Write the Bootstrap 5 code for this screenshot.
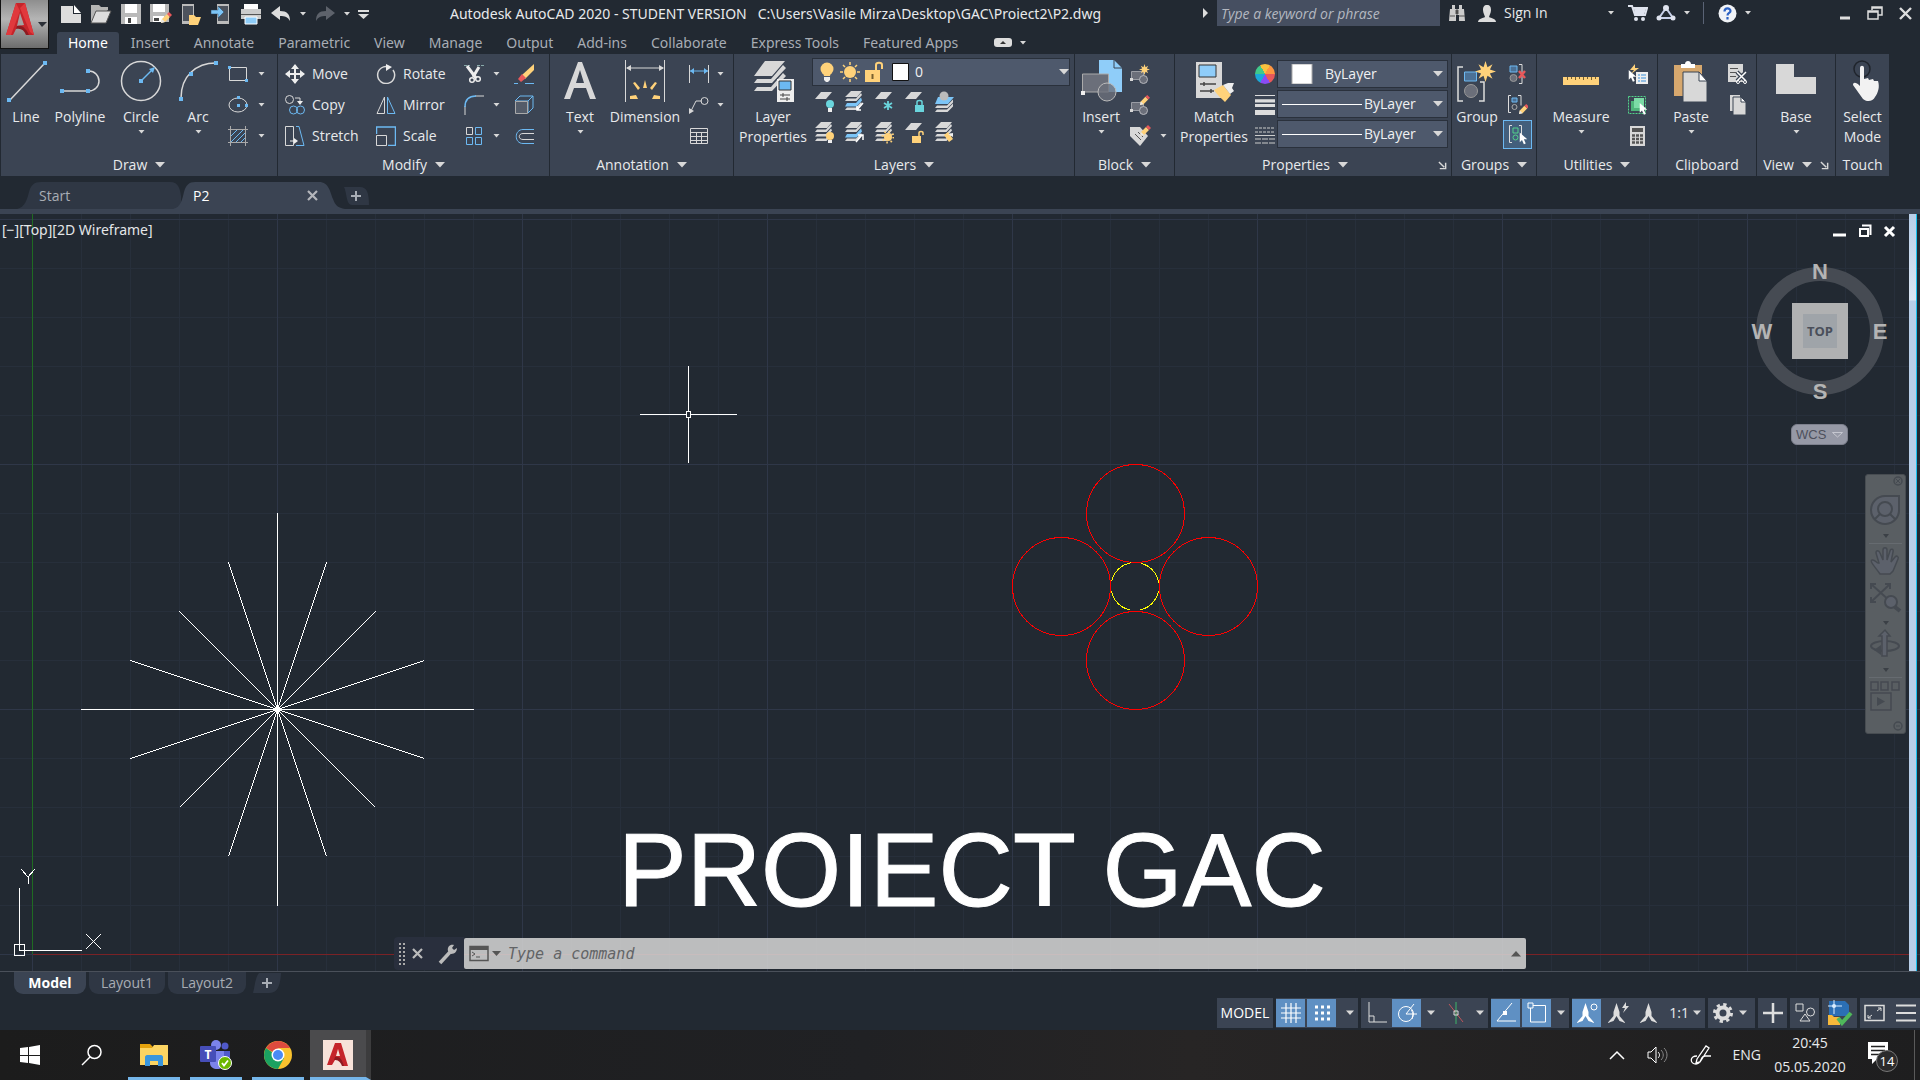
<!DOCTYPE html>
<html lang="en">
<head>
<meta charset="utf-8">
<meta name="viewport" content="width=device-width, initial-scale=1">
<title>Autodesk AutoCAD 2020 - P2.dwg</title>
<link rel="stylesheet" href="https://cdn.jsdelivr.net/npm/bootstrap@5.3.0/dist/css/bootstrap.min.css">
<style>
:root{--bg:#222932;--pan:#3b4453;--on:#5f90c3}
body{font-family:"Open Sans","Noto Sans",sans-serif;font-size:14px;line-height:20px;color:#e8eaec;background:var(--bg)}
button{background:none;border:0;padding:0;color:inherit;font:inherit}
svg{display:block;flex:none;fill:none}
a{color:inherit;text-decoration:none}
.app{min-height:100vh}
.logo{width:49px;height:49px;background:linear-gradient(#8e8e8e,#b5b5b5 40%,#6d6d6d);border:1px solid #111;border-top:0}
.titlebar{height:32px}
.qat{height:27px;padding-left:7px}
.qbtn{width:30px;display:flex;justify-content:center}
.apptitle{margin-left:81px;padding-top:4px;white-space:nowrap}
.apptitle,.rtab,.vpl{font-family:"Noto Sans","Open Sans",sans-serif}
.search{width:223px;height:26px;background:#464f61;border:0;color:#c9ccd2;font-style:italic;padding:0 4px}
.search::placeholder{color:#b4b8c0;opacity:1}
.acct{width:480px}
.rtab{height:22px;line-height:22px;padding:0 12px;color:#a8adb5;white-space:nowrap;display:block}
.rtab.active{background:var(--pan);color:#fff;border-radius:3px 3px 0 0;padding:0 11px}
.ribbon{height:122px;padding-left:1px}
.rpanel{background:var(--pan);margin-right:1px;display:flex;flex-direction:column;flex:none}
.pbody{height:100px;display:flex;padding-top:4px}
.ptitle{height:22px;display:flex;align-items:center;justify-content:center;gap:8px;white-space:nowrap}
.big{display:flex;flex-direction:column;align-items:center;padding-top:2px;flex:none;white-space:nowrap}
.big svg.ic{width:44px;height:42px}
.big .lb{line-height:20px;height:28px;padding-top:5px}
.stack{display:flex;flex-direction:column;flex:none}
.sb{height:31px;display:flex;align-items:center;gap:7px;white-space:nowrap}
.cv{margin-left:2px}
.combo{background:#4e596c;border:1px solid #2a313c;display:flex;align-items:center;height:28px;margin-bottom:2px}
.combo select{appearance:none;background:transparent;border:0;color:#f0f1f3;flex:1 1 0;min-width:0;padding:0;height:24px;font:inherit}
.doctabs{height:33px;padding-left:24px}
.dtab{position:relative;width:156px;height:27px;display:flex;align-items:center;padding-left:15px;color:#a8adb5}
.dtab>svg.shape{position:absolute;left:-7px;top:0;z-index:0}
.dtab>*{z-index:1}
.strip{height:5px;background:var(--pan)}
.cad{position:relative;flex:1 1 auto;min-height:500px;overflow:hidden;border-bottom:1px solid #4a505a}
.scene{position:absolute;inset:0;width:100%;height:100%}
.vscroll{position:absolute;right:3px;top:0;bottom:0;width:8px;background:linear-gradient(#b9cfe9,#dbe6f4 86px,#b9cfe9 87px);border-right:1px solid #19c3f0}
.vpl{position:absolute;left:2px;top:6px;color:#e4e6e8}
.wctl{position:absolute;right:23px;top:9px;display:flex;gap:10px}
.vcube{position:absolute;right:31px;top:46px}
.vcube text{fill:#b4b4b4}
.wcs{position:absolute;right:72px;top:210px;width:57px;height:21px;border-radius:6px;background:#9699a6;border:1px solid #7d808d;color:#4d505c;font:13px/18px "Liberation Sans",sans-serif;display:flex;align-items:center;justify-content:space-between;padding:0 4px}
.navbox{position:absolute;right:14px;top:260px;background:#595e62;border-radius:3px;border:1px solid #474c51}
.cmd{position:absolute;left:394px;right:394px;bottom:1px;height:33px;display:flex}
.cmdl{width:70px;background:#292f3d;border-radius:4px 0 0 4px;display:flex;align-items:center;padding-left:1px}
.cmdr{flex:1;background:rgba(211,211,211,.87);border-radius:2px;display:flex;align-items:center;margin:1px 0;padding:0 5px}
.cmdr input{flex:1;height:28px;line-height:24px;background:transparent;border:0;outline:0;font-family:"DejaVu Sans Mono",monospace;font-style:italic;font-size:15px;color:#555;padding:0 7px}
.cmdr input::placeholder{color:#626466;opacity:1}
.bottom{height:58px}
.lay{padding-left:14px;gap:3px}
.ltab{height:22px;background:#2f3744;color:#a8adb5;border-radius:0 0 9px 9px;line-height:21px;text-align:center}
.ltab.active{background:var(--pan);color:#fff;font-weight:700}
.status{height:30px;margin-top:4px;gap:3px}
.sg{background:var(--pan);display:flex;align-items:center;height:30px;gap:2px;flex:none}
.st{width:29px;height:28px;display:flex;align-items:center;justify-content:center}
.st.on{background:var(--on)}
.st.wide{width:35px}
.task{height:50px;background:linear-gradient(90deg,#1c1c1c,#202124 45%,#272525 62%,#1e1e1f)}
.tk{width:52px;height:50px;display:flex;align-items:center;justify-content:center;margin-right:10px}
.tk.run{border-bottom:3px solid #75b6ea;padding-top:3px}
.tk.run.cur{background:#4b4b4d;width:61px;margin-left:-4px;border-right:5px solid #3c3c3d}
.clock{width:82px;text-align:center;line-height:24px}
.wheel{width:20px;height:20px;border-radius:50%;background:conic-gradient(#f9c13e 0 8%,#ff9640 8% 25%,#e8585a 25% 42%,#8a4bf5 42% 58%,#1aa9d8 58% 75%,#41c98a 75% 92%,#f9c13e 92%)}
.uicon{stroke:#454a51;stroke-width:2}
</style>
<script src="https://cdn.jsdelivr.net/npm/bootstrap@5.3.0/dist/js/bootstrap.bundle.min.js"></script>
</head>
<body>
<svg width="0" height="0" class="position-absolute" aria-hidden="true">
<symbol id="dn" viewBox="0 0 6 4"><path d="M0 0h6L3 3.6z" fill="#d8d8d8"/></symbol>
<symbol id="dl" viewBox="0 0 10 6"><path d="M0 0h10L5 5.5z" fill="#d8d8d8"/></symbol>
<symbol id="sheet" viewBox="0 0 20 20"><path d="M7 1h11l-6 7H1z" fill="#d8d8d8"/></symbol>
<symbol id="stk" viewBox="0 0 20 20"><path d="M7 0h11l-5 6H1zM1 10l2-2.500h9l5-5.500 1 2-5.500 6zM1 14.500L3 12h9l5-5.500 1 2-5.500 6zM1 19l2-2.500h9l5-5.500 1 2-5.500 6z" fill="#d8d8d8"/></symbol>
<symbol id="stb" viewBox="0 0 20 20"><path d="M7 0h11l-5 6H1zM1 10l2-2.500h9l5-5.500 1 2-5.500 6zM1 19l2-2.500h9l5-5.500 1 2-5.500 6z" fill="#d8d8d8"/><path d="M1 15.500L3 12h9l5-5.500 1 3-5.500 6z" fill="#7cc5f7"/></symbol>
<symbol id="blk" viewBox="0 0 22 22"><path d="M2.500 8.500h12v8h-12z" fill="#6b6f7a" stroke="#9a9da5"/><circle cx="14.500" cy="16.500" r="4" fill="#6b6f7a" stroke="#b4b6bb"/><path d="M1 15h3v3H1z" fill="#d8d8d8"/></symbol>
<symbol id="pen" viewBox="0 0 12 12"><path d="M1 11l1-4 5-5 3 3-5 5z" fill="#ffd27a"/><path d="M7 2l2-2 3 3-2 2z" fill="#e8585a"/><path d="M1 11l1-4 3 3z" fill="#e8e8e8"/></symbol>
<symbol id="launch" viewBox="0 0 10 10"><path d="M1 1l6 6M8.500 2v6.500H2" stroke="#d8d8d8" stroke-width="1.600"/></symbol>
<symbol id="star" viewBox="0 0 20 20"><path d="M10 0l1.900 6 4.800-3-2.500 5 5.800 2-5.800 2 2.500 5-4.800-3-1.900 6-1.900-6-4.800 3 2.500-5L0 10l5.800-2-2.500-5 4.800 3z" fill="#ffd27a"/></symbol>
<symbol id="ptr" viewBox="0 0 12 16"><path d="M1 0v13l3-3 2.500 5.500 2.500-1L6.500 9H11z" fill="#fff"/></symbol>
<symbol id="annot" viewBox="0 0 20 22"><path d="M9.500 1c1 3 2 6 3 9v4l6 7-6-2-3-5-3 5-6 2 6-7v-4c1-3 2-6 3-9z" fill="currentColor"/></symbol>
</svg>

<div class="app d-flex flex-column">
<header class="d-flex">
  <button class="logo" aria-label="Application menu"><svg width="47" height="48" viewBox="0 0 47 48"><path d="M15 3h9l9 32h-7l-2-6c-4-3-7-3-9 0l-3 6H5z" fill="#c5242a"/><path d="M15 3l4 8-9 24H5zM24 3l9 32-4-3L19 8z" fill="#e0393d"/><path d="M19 13l4 12-7 1z" fill="#a3a3a3"/><path d="M16 26c4-1 8 0 12 9h-3c-2-5-5-7-10-6z" fill="#8e1a20"/><path d="M37 22h9l-5 5z" fill="#2b2f36"/></svg></button>
  <div class="flex-grow-1">
    <div class="titlebar d-flex align-items-start">
      <div class="qat d-flex align-items-center">
        <button class="qbtn" aria-label="New"><svg width="22" height="20"><path d="M1 2h12v8h8v9H1z" fill="#ddd"/><path d="M14 1l7 8h-7z" fill="#fff"/></svg></button>
        <button class="qbtn" aria-label="Open"><svg width="22" height="20"><path d="M1 18V1h8l2 2h7v3" fill="#b5b5b5"/><path d="M1 19L6 7h15l-5 12z" fill="#ddd" stroke="#555"/></svg></button>
        <button class="qbtn" aria-label="Save"><svg width="22" height="22"><path d="M1 1h20v20H1z" fill="#b9b9b9"/><path d="M5 1h12v9H5zM5 14h12v7H5z" fill="#fff"/><path d="M8 15h3v5H8z" fill="#444"/></svg></button>
        <button class="qbtn" aria-label="Save as"><svg width="24" height="22"><path d="M1 1h19v18H1z" fill="#b9b9b9"/><path d="M4 1h12v8H4zM4 13h11v6H4z" fill="#fff"/><path d="M5 15h5v3H5z" fill="#444"/><use href="#pen" x="11" y="9" width="12" height="12"/></svg></button>
        <button class="qbtn" aria-label="Open from mobile"><svg width="22" height="22"><path d="M2 1h12v20H2z" fill="#bbb"/><path d="M3 3h10v15H3z" fill="#4d535d"/><path d="M9 12h5l2 2h5l-3 8H9z" fill="#ffd27a"/></svg></button>
        <button class="qbtn" aria-label="Save to mobile"><svg width="22" height="22"><path d="M7 1h12v20H7z" fill="#bbb"/><path d="M8 3h10v15H8z" fill="#4d535d"/><path d="M1 7h7V3l6 6-6 6v-4H1z" fill="#7cc5f7" stroke="#29405a" stroke-width=".5"/></svg></button>
        <button class="qbtn" aria-label="Plot"><svg width="22" height="22"><path d="M4 1h14v6H4z" fill="#fff"/><path d="M1 6h20v10H1z" fill="#ccc"/><path d="M1 11h20v1H1z" fill="#555"/><path d="M5 14h12v7H5z" fill="#8fcdf9" stroke="#fff"/></svg></button>
        <button class="qbtn" aria-label="Undo"><svg width="22" height="18"><path d="M1 8l9-7v5c7 0 10 3 10 10-2-4-5-5-10-5v4z" fill="#ddd"/></svg></button>
        <button aria-label="Undo list" class="px-1"><svg width="6" height="4"><use href="#dn"/></svg></button>
        <button aria-label="Redo" class="ms-1"><svg width="22" height="18"><path d="M21 8l-9-7v5C5 6 2 9 2 16c2-4 5-5 10-5v4z" fill="#5d626b"/></svg></button>
        <button aria-label="Redo list" class="ps-2 pe-1"><svg width="6" height="4"><use href="#dn"/></svg></button>
        <button aria-label="Customize" class="ps-1"><svg width="11" height="10"><path d="M0 1h11v2H0zM0 5h11L5.500 10z" fill="#ddd"/></svg></button>
      </div>
      <div class="apptitle">Autodesk AutoCAD 2020 - STUDENT VERSION&nbsp;&nbsp; C:\Users\Vasile Mirza\Desktop\GAC\Proiect2\P2.dwg</div>
      <div class="ms-auto d-flex align-items-center">
        <svg width="6" height="10" class="me-2"><path d="M0 0l5 5-5 5z" fill="#ddd"/></svg>
        <input class="search" type="text" aria-label="Search" placeholder="Type a keyword or phrase">
        <div class="acct d-flex align-items-center">
          <button aria-label="Find" class="ms-2"><svg width="18" height="18"><path d="M2 5h2V1h3v4h4V1h3v4h2l1 12h-6v-6H8v6H1z" fill="#ccc"/><path d="M8 6h2v4H8zM2 12h5M11 12h6" fill="#444" stroke="#555"/></svg></button>
          <button class="d-flex align-items-center gap-2" style="margin-left:12px"><svg width="18" height="19"><path d="M9 1c3 0 4 2 4 5s-2 6-2 7c2 1 7 2 7 5H0c0-3 5-4 7-5 0-1-2-4-2-7s1-5 4-5z" fill="#ddd"/></svg>Sign In</button>
          <button aria-label="Account" style="margin-left:60px"><svg width="6" height="4"><use href="#dn"/></svg></button>
          <button aria-label="App store" style="margin-left:14px"><svg width="20" height="18"><path d="M0 2h4l3 9h10l2-7H5" stroke="#dfe3ee" stroke-width="2"/><path d="M6 5h12l-2 6H7z" fill="#dfe3ee"/><circle cx="8" cy="15" r="2" fill="#dfe3ee"/><circle cx="15" cy="15" r="2" fill="#dfe3ee"/></svg></button>
          <button aria-label="Autodesk" class="ms-2 me-2"><svg width="20" height="18"><path d="M10 4L3 14h14z" stroke="#c8d0ea" stroke-width="2"/><circle cx="10" cy="4" r="3" fill="#dfe3ee"/><circle cx="3" cy="14" r="2.500" fill="#dfe3ee"/><circle cx="17" cy="14" r="2.500" fill="#dfe3ee"/></svg></button>
          <svg width="6" height="4"><use href="#dn"/></svg>
          <svg width="28" height="22"><path d="M13.500 0v22" stroke="#5a6375"/></svg>
          <button aria-label="Help"><svg width="19" height="19" viewBox="0 0 19 19"><circle cx="9.500" cy="9.500" r="9" fill="#f1f3f7"/><path d="M6.500 7.500c0-4 6-4 6-.5 0 2-3 2-3 4.500M9.500 13v2.500" stroke="#2d62c4" stroke-width="2.200"/></svg></button>
          <svg width="6" height="4" class="ms-2"><use href="#dn"/></svg>
          <button aria-label="Minimize" class="ms-auto me-3"><svg width="12" height="14"><path d="M1 12h10" stroke="#ddd" stroke-width="3"/></svg></button>
          <button aria-label="Restore" class="me-3"><svg width="16" height="14"><path d="M5 4V1h10v8h-4M5 2h10M1 5h10v8H1zM1 6h10" stroke="#ddd" stroke-width="1.500"/></svg></button>
          <button aria-label="Close" class="me-2"><svg width="13" height="13"><path d="M1 1l11 11M12 1L1 12" stroke="#ddd" stroke-width="2.400"/></svg></button>
        </div>
      </div>
    </div>
    <nav class="d-flex ps-2">
      <a href="#" class="rtab active">Home</a><a href="#" class="rtab">Insert</a><a href="#" class="rtab">Annotate</a><a href="#" class="rtab">Parametric</a><a href="#" class="rtab">View</a><a href="#" class="rtab">Manage</a><a href="#" class="rtab">Output</a><a href="#" class="rtab">Add-ins</a><a href="#" class="rtab">Collaborate</a><a href="#" class="rtab">Express Tools</a><a href="#" class="rtab">Featured Apps</a>
      <button aria-label="Minimize ribbon" class="d-flex align-items-center gap-2 ms-4"><svg width="18" height="10"><rect width="18" height="9" rx="3" fill="#ddd"/><path d="M6 6h6L9 3z" fill="#333"/></svg><svg width="6" height="4"><use href="#dn"/></svg></button>
    </nav>
  </div>
</header>

<main class="d-flex flex-column flex-grow-1">
<div class="ribbon d-flex">
  <section class="rpanel" style="width:276px"><div class="pbody">
    <button class="big" style="width:50px"><svg class="ic" viewBox="0 0 44 42"><path d="M6 40L40 4" stroke="#d8d8d8" stroke-width="1.500"/><path d="M3 38h4v4H3zM39 1h4v4h-4z" fill="#6cb9f2"/></svg><span class="lb">Line</span></button>
    <button class="big" style="width:58px"><svg class="ic" viewBox="0 0 44 42"><path d="M4 31h27a10 10 0 0 0 0-20h-2" stroke="#d8d8d8" stroke-width="1.500"/><path d="M2 29h4v4H2zM28 29h4v4h-4zM28 9h4v4h-4z" fill="#6cb9f2"/></svg><span class="lb">Polyline</span></button>
    <button class="big" style="width:64px"><svg class="ic" viewBox="0 0 44 42"><circle cx="22" cy="21" r="19.500" stroke="#d8d8d8" stroke-width="1.500"/><path d="M22 21L34 9" stroke="#6cb9f2" stroke-width="1.500"/><path d="M20 19h4v4h-4zM30 9l6-2-2 6z" fill="#6cb9f2"/></svg><span class="lb">Circle</span><svg width="7" height="4"><use href="#dn"/></svg></button>
    <button class="big" style="width:50px"><svg class="ic" viewBox="0 0 44 42"><path d="M5 38C5 16 20 3 40 3" stroke="#d8d8d8" stroke-width="1.500"/><path d="M3 37h4v4H3zM13 12h4v4h-4zM38 1h4v4h-4z" fill="#6cb9f2"/></svg><span class="lb">Arc</span><svg width="7" height="4"><use href="#dn"/></svg></button>
    <div class="stack ms-1">
      <button class="sb" aria-label="Rectangle"><svg width="22" height="20"><path d="M2.500 3.500h17v13h-17z" stroke="#d8d8d8"/><path d="M1 2h3v3H1zM18 15h3v3h-3z" fill="#6cb9f2"/></svg><svg width="7" height="4" class="cv"><use href="#dn"/></svg></button>
      <button class="sb" aria-label="Ellipse"><svg width="22" height="20"><ellipse cx="11" cy="10" rx="9" ry="7" stroke="#d8d8d8"/><path d="M10 1h3v3h-3zM10 9h3v3h-3zM18 9h3v3h-3z" fill="#6cb9f2"/></svg><svg width="7" height="4" class="cv"><use href="#dn"/></svg></button>
      <button class="sb" aria-label="Hatch"><svg width="22" height="20"><path d="M1 3.500h20M1 16.500h20M3.500 0v20M18.500 0v20" stroke="#aaa"/><path d="M4 10l6-6M4 16L16 4M9 16l9-9M14 16l4-4" stroke="#6cb9f2"/></svg><svg width="7" height="4" class="cv"><use href="#dn"/></svg></button>
    </div></div><div class="ptitle">Draw <svg width="10" height="6"><use href="#dl"/></svg></div></section>

  <section class="rpanel" style="width:271px"><div class="pbody">
    <div class="stack" style="width:91px;padding-left:7px">
      <button class="sb"><svg width="20" height="20"><path d="M10 1v18M1 10h18" stroke="#eee" stroke-width="2"/><path d="M10 0l4 5H6zM10 20l4-5H6zM0 10l5-4v8zM20 10l-5-4v8z" fill="#eee"/></svg>Move</button>
      <button class="sb"><svg width="20" height="20"><circle cx="4.500" cy="4.500" r="4" stroke="#d8d8d8"/><circle cx="8.500" cy="15" r="4" stroke="#6cb9f2"/><circle cx="15.500" cy="15" r="4" stroke="#6cb9f2"/><path d="M10 3h5v4" stroke="#d8d8d8"/><path d="M12 6h6l-3 4z" fill="#eee"/></svg>Copy</button>
      <button class="sb"><svg width="20" height="20"><path d="M.5 .5h8v19h-8z" stroke="#d8d8d8"/><path d="M11 .5h3l5 19h-8" stroke="#6cb9f2"/><path d="M5 15h6" stroke="#eee"/><path d="M9 12l4 3-4 3z" fill="#eee"/></svg>Stretch</button>
    </div>
    <div class="stack" style="width:87px;padding-left:7px">
      <button class="sb"><svg width="20" height="20"><path d="M13 3A8.500 8.500 0 1 0 17 6" stroke="#d8d8d8" stroke-width="1.500"/><path d="M10 0l6 3-6 4z" fill="#eee"/></svg>Rotate</button>
      <button class="sb"><svg width="20" height="20"><path d="M8.500 2v16.500H1z" stroke="#d8d8d8"/><path d="M11.500 2v16.500H19z" stroke="#6cb9f2"/></svg>Mirror</button>
      <button class="sb"><svg width="20" height="20"><path d="M.5 8V1h19v18.500H12" stroke="#6cb9f2" stroke-width="1.500"/><path d="M.5 9.500h10v10H.5z" stroke="#d8d8d8"/></svg>Scale</button>
    </div>
    <div class="stack" style="width:58px;padding-left:8px">
      <button class="sb" aria-label="Trim"><svg width="20" height="20"><path d="M0 1.500h6M13 1.500h7" stroke="#8aa" stroke-dasharray="3 1"/><path d="M3 2l9 12M15 3L9 13" stroke="#eee" stroke-width="3"/><circle cx="8" cy="16" r="2.300" stroke="#eee" stroke-width="1.500"/><circle cx="14" cy="15" r="2.300" stroke="#eee" stroke-width="1.500"/></svg><svg width="7" height="4" class="cv"><use href="#dn"/></svg></button>
      <button class="sb" aria-label="Fillet"><svg width="20" height="20"><path d="M1 20V11M11 1h9" stroke="#d8d8d8"/><path d="M1 12C1 5 5 1 12 1" stroke="#6cb9f2" stroke-width="1.500"/></svg><svg width="7" height="4" class="cv"><use href="#dn"/></svg></button>
      <button class="sb" aria-label="Array"><svg width="20" height="20"><path d="M2.500 1.500h6v7h-6z" stroke="#d8d8d8"/><path d="M11.500 1.500h6v7h-6zM2.500 11.500h6v7h-6zM11.500 11.500h6v7h-6z" stroke="#6cb9f2"/></svg><svg width="7" height="4" class="cv"><use href="#dn"/></svg></button>
    </div>
    <div class="stack">
      <button class="sb" aria-label="Erase"><svg width="20" height="20"><path d="M8 11L20 0v6l-9 9z" fill="#ffd27a"/><path d="M4 15l4-5 4 4-5 4z" fill="#e8585a"/><path d="M0 19.500h4M11 19.500h9" stroke="#6cb9f2"/></svg></button>
      <button class="sb" aria-label="Explode"><svg width="20" height="20"><path d="M1 6l5-5h13v12l-5 5M14 6l5-5M1 6h13v12" stroke="#6cb9f2"/><path d="M1.500 6.500h12v12h-12z" stroke="#aaa" fill="#545c69"/></svg></button>
      <button class="sb" aria-label="Offset"><svg width="20" height="20"><path d="M20 3.500H9c-9 0-9 14 0 14h11" stroke="#6cb9f2"/><path d="M20 7.500H9c-5 0-5 6 0 6h11" stroke="#d8d8d8"/></svg></button>
    </div></div><div class="ptitle">Modify <svg width="10" height="6"><use href="#dl"/></svg></div></section>

  <section class="rpanel" style="width:183px"><div class="pbody">
    <button class="big" style="width:60px"><svg class="ic" viewBox="0 0 44 42"><path d="M6 39L20 2h4l14 37h-6l-4-11H16l-4 11zM18 23h8L22 10z" fill="#d8d8d8"/></svg><span class="lb">Text</span><svg width="7" height="4"><use href="#dn"/></svg></button>
    <button class="big" style="width:70px"><svg class="ic" viewBox="0 0 44 42"><path d="M2.500 0v42M41.500 0v42M4 8h36" stroke="#d8d8d8"/><path d="M3 8l5-3v6zM41 8l-5-3v6z" fill="#d8d8d8"/><path d="M20 28l2-8 2 8zM15 30l-5-7 2-1 5 6zM29 30l5-7-2-1-5 6zM13 35l-6 1v3h8zM31 35l6 1v3h-8z" fill="#ffd27a"/></svg><span class="lb">Dimension</span></button>
    <div class="stack" style="margin-left:8px">
      <button class="sb" aria-label="Linear"><svg width="22" height="20"><path d="M1.500 1v18M20.500 1v18" stroke="#d8d8d8"/><path d="M2 7h18" stroke="#6cb9f2"/><path d="M2 7l4-3v6zM20 7l-4-3v6z" fill="#6cb9f2"/></svg><svg width="7" height="4"><use href="#dn"/></svg></button>
      <button class="sb" aria-label="Leader"><svg width="22" height="20"><path d="M3 16l5-10h6" stroke="#d8d8d8"/><circle cx="16.500" cy="6" r="3.500" stroke="#d8d8d8"/><path d="M1 19v-6l5 3z" fill="#d8d8d8"/></svg><svg width="7" height="4"><use href="#dn"/></svg></button>
      <button class="sb" aria-label="Table"><svg width="22" height="20"><path d="M2.500 2.500h17v15h-17zM2 6.500h18M2 10.500h18M2 14.500h18M8.500 6v12M13.500 6v12" stroke="#d8d8d8"/></svg></button>
    </div></div><div class="ptitle">Annotation <svg width="10" height="6"><use href="#dl"/></svg></div></section>

  <section class="rpanel" style="width:340px"><div class="pbody">
    <button class="big" style="width:78px"><svg class="ic" viewBox="0 0 44 42"><path d="M14 1h20L21 16H3zM3 23l3-4h14L32 5l3 3-14 15zM3 31l3-4h14l12-14 3 3-14 15z" fill="#d8d8d8"/><path d="M26 19h17v23H26z" fill="#eee"/><path d="M28 21h12v9H28z" fill="#6cb9f2" stroke="#333"/><path d="M29 35h10M29 39h10M32 33v4M36 37v4" stroke="#444"/></svg><span class="lb">Layer<br>Properties</span></button>
    <div class="flex-grow-1">
      <div class="combo me-1 mb-0">
        <svg width="74" height="22" class="ms-1"><circle cx="10" cy="8" r="6.500" fill="#ffd27a"/><path d="M6 11h8l-1 4H7z" fill="#ffd27a"/><path d="M7 16h6v3l-2 2H9l-2-2z" fill="#eee"/><circle cx="33" cy="11" r="6" fill="#ffd27a"/><path d="M33 1v3M33 18v3M23 11h3M40 11h3M26 4l2 2M38 16l2 2M40 4l-2 2M28 16l-2 2" stroke="#ffd27a" stroke-width="1.500"/><path d="M48 9h15v12H48z" fill="#ffd27a"/><path d="M59 9V4c0-3 6-3 6 0v4" stroke="#ffd27a" stroke-width="2"/><path d="M55.500 13v5" stroke="#77602f" stroke-width="2"/></svg>
        <svg width="20" height="20" class="me-1"><path d="M1.500 1.500h16v17h-16z" fill="#fff" stroke="#111"/></svg>
        <select aria-label="Layer"><option>0</option></select><svg width="10" height="6"><use href="#dl"/></svg>
      </div>
      <div class="sb" style="gap:10px;padding-left:2px">
        <button aria-label="Layer off"><svg width="20" height="22"><use href="#sheet" width="20" height="20"/><circle cx="16" cy="13" r="4" fill="#6ad5dd"/><path d="M14 17h4v4h-4z" fill="#eee"/></svg></button>
        <button aria-label="Isolate"><svg width="20" height="22"><use href="#stb" width="20" height="20"/><path d="M19 12l-6 7M13 15v4h4" stroke="#fff" stroke-width="1.500"/></svg></button>
        <button aria-label="Freeze"><svg width="20" height="22"><use href="#sheet" width="20" height="20"/><path d="M14 10v9M10 12l8 5M18 12l-8 5" stroke="#6ad5dd" stroke-width="1.800"/></svg></button>
        <button aria-label="Lock"><svg width="20" height="22"><use href="#sheet" width="20" height="20"/><path d="M11 14h9v7h-9z" fill="#6ad5dd"/><path d="M13 14v-3c0-2 5-2 5 0v3" stroke="#6ad5dd" stroke-width="1.500"/></svg></button>
        <button aria-label="Make current"><svg width="20" height="22"><path d="M4 6h16l-6 7H1z" fill="#7cc5f7"/><circle cx="10" cy="5" r="4.500" fill="#bbb"/><path d="M1 17l2-2.500h10l6-6v3L13.500 17zM1 21l2-2.500h10l6-6v3L13.500 21z" fill="#d8d8d8"/></svg></button>
      </div>
      <div class="sb" style="gap:10px;padding-left:2px">
        <button aria-label="Turn all on"><svg width="20" height="22"><use href="#stk" width="20" height="20"/><circle cx="16" cy="14" r="4" fill="#ffd27a"/><path d="M14 18h4v3h-4z" fill="#eee"/></svg></button>
        <button aria-label="Unisolate"><svg width="20" height="22"><use href="#stb" width="20" height="20"/><path d="M12 20l6-7M14 13h5v5" stroke="#fff" stroke-width="1.500"/></svg></button>
        <button aria-label="Thaw"><svg width="20" height="22"><use href="#stk" width="20" height="20"/><circle cx="14" cy="15" r="4" fill="#ffd27a"/><circle cx="14" cy="15" r="5.500" stroke="#ffd27a" stroke-width="2" stroke-dasharray="1.500 2.800"/></svg></button>
        <button aria-label="Unlock"><svg width="20" height="22"><use href="#sheet" width="20" height="20"/><path d="M8 14h9v7H8z" fill="#ffd27a"/><path d="M15 14v-3c0-2 4-2 4 0v2" stroke="#ffd27a" stroke-width="1.500"/></svg></button>
        <button aria-label="Match layer"><svg width="20" height="22"><use href="#stk" width="20" height="20"/><path d="M10 13l4-3 5 7-4 3z" fill="#ffd27a"/><path d="M14 12l5-1 0 4z" fill="#eee"/></svg></button>
      </div>
    </div></div><div class="ptitle">Layers <svg width="10" height="6"><use href="#dl"/></svg></div></section>

  <section class="rpanel" style="width:99px"><div class="pbody">
    <button class="big" style="width:52px"><svg class="ic" viewBox="0 0 44 42"><path d="M20 0h15l8 8v24H20z" fill="#8fcdf9"/><path d="M35 0v8h8" stroke="#3b4453"/><path d="M3.500 14h26v18h-26z" fill="#6b6f7a" stroke="#aaa"/><circle cx="28" cy="32" r="9" fill="#6b6f7a" fill-opacity=".8" stroke="#bbb"/><path d="M2 31h4v4H2z" fill="#eee"/></svg><span class="lb">Insert</span><svg width="7" height="4"><use href="#dn"/></svg></button>
    <div class="stack" style="margin-left:2px">
      <button class="sb" aria-label="Create block"><svg width="22" height="22"><use href="#blk" width="22" height="22"/><use href="#star" x="10" y="1" width="11" height="11"/></svg></button>
      <button class="sb" aria-label="Edit block"><svg width="22" height="22"><use href="#blk" width="22" height="22"/><use href="#pen" x="10" y="1" width="11" height="11"/></svg></button>
      <button class="sb" aria-label="Edit attributes"><svg width="22" height="22"><path d="M1 2h10l8 9-8 10L1 11z" fill="#d8d8d8"/><path d="M6 9l6 6M9 7l5 5" stroke="#555"/><use href="#pen" x="10" y="0" width="12" height="12"/></svg><svg width="7" height="4" class="cv"><use href="#dn"/></svg></button>
    </div></div><div class="ptitle">Block <svg width="10" height="6"><use href="#dl"/></svg></div></section>

  <section class="rpanel" style="width:276px"><div class="pbody">
    <button class="big" style="width:78px"><svg class="ic" viewBox="0 0 44 42"><path d="M4 2h26v36H4z" fill="#d8d8d8"/><path d="M7 5h17v12H7z" fill="#8fcdf9" stroke="#333"/><path d="M8 24h16M8 31h14M12 22v4M19 29v4" stroke="#444" stroke-width="1.500"/><path d="M22 30l9-5 8 10-6 7c-3-3-8-7-11-12z" fill="#ffd27a"/><path d="M31 25l5-2 6 0-2 5 2 3-4 3z" fill="#eee"/></svg><span class="lb">Match<br>Properties</span></button>
    <div class="stack align-items-center" style="width:24px">
      <div class="sb"><span class="wheel"></span></div>
      <div class="sb"><svg width="20" height="20"><path d="M0 .5h20M0 5h20M0 11h20M0 17.500h20" stroke="#ddd"/><path d="M0 6h20M0 10.500h20" stroke="#ddd" stroke-width="3"/><path d="M0 17.500h20" stroke="#ddd" stroke-width="5"/></svg></div>
      <div class="sb"><svg width="20" height="20"><path d="M0 2h20M0 6h20" stroke="#ccc" stroke-dasharray="3 1"/><path d="M0 9.500h20" stroke="#ccc"/><path d="M0 13h20M0 17h20" stroke="#ccc" stroke-dasharray="6 1"/></svg></div>
    </div>
    <div class="flex-grow-1" style="padding:2px 3px 0 0">
      <div class="combo"><svg width="47" height="20"><path d="M14 0h20v20H14z" fill="#fff" stroke="#aaa"/></svg><select aria-label="Color"><option>ByLayer</option></select><svg width="10" height="6" class="me-1"><use href="#dl"/></svg></div>
      <div class="combo"><svg width="86" height="4"><path d="M4 2.500h80" stroke="#fff"/></svg><select aria-label="Lineweight"><option>ByLayer</option></select><svg width="10" height="6" class="me-1"><use href="#dl"/></svg></div>
      <div class="combo"><svg width="86" height="4"><path d="M4 2.500h80" stroke="#fff"/></svg><select aria-label="Linetype"><option>ByLayer</option></select><svg width="10" height="6" class="me-1"><use href="#dl"/></svg></div>
    </div></div><div class="ptitle position-relative pe-3">Properties <svg width="10" height="6"><use href="#dl"/></svg><svg width="9" height="9" class="position-absolute end-0 me-1"><use href="#launch"/></svg></div></section>

  <section class="rpanel" style="width:84px"><div class="pbody">
    <button class="big" style="width:50px"><svg class="ic" viewBox="0 0 44 42"><path d="M8 7H3v34h5M25 22h4v19h-5" stroke="#ddd" stroke-width="1.500"/><path d="M9.500 12h12v9h-12z" fill="#4c7196" stroke="#6cb9f2"/><circle cx="16" cy="31" r="6.500" fill="#6b6f7a" stroke="#999"/><use href="#star" x="20" y="1" width="21" height="21"/></svg><span class="lb">Group</span></button>
    <div class="stack">
      <button class="sb justify-content-center" style="width:31px" aria-label="Ungroup"><svg width="20" height="20"><path d="M2 2h7v6H2z" fill="#4c7196" stroke="#6cb9f2"/><circle cx="5.500" cy="14" r="3.500" fill="#6b6f7a" stroke="#999"/><path d="M11 .5h3v19h-3" stroke="#ddd"/><path d="M11 7l6 7M17 7l-6 7" stroke="#e8585a" stroke-width="2.500"/></svg></button>
      <button class="sb justify-content-center" style="width:31px" aria-label="Edit group"><svg width="20" height="20"><path d="M3 .5H.5v17H3M10 .5h3v10" stroke="#ddd"/><path d="M4 3h5v4H4z" fill="#4c7196" stroke="#6cb9f2"/><circle cx="6.500" cy="12" r="2.500" stroke="#aaa"/><use href="#pen" x="10" y="9" width="11" height="11"/></svg></button>
      <button class="sb justify-content-center" style="width:29px;height:29px;margin-left:1px;background:#435f7c;border:1px solid #6cb9f2" aria-label="Group selection"><svg width="20" height="20"><path d="M4 .5H1.500v17H4M11 .5h2.500v10" stroke="#ddd"/><path d="M5 3h5v5H5z" stroke="#53d28a"/><circle cx="7.500" cy="12.500" r="2.500" stroke="#53d28a"/><use href="#ptr" x="11" y="7" width="9" height="13"/></svg></button>
    </div></div><div class="ptitle">Groups <svg width="10" height="6"><use href="#dl"/></svg></div></section>

  <section class="rpanel" style="width:120px"><div class="pbody">
    <button class="big" style="width:88px"><svg class="ic" viewBox="0 0 44 42"><path d="M4 17h36v8H4z" fill="#ffd27a"/><path d="M8.500 17v3M12.500 17v2M16.500 17v3M20.500 17v2M24.500 17v3M28.500 17v2M32.500 17v3M36.500 17v2" stroke="#77602f"/></svg><span class="lb">Measure</span><svg width="7" height="4"><use href="#dn"/></svg></button>
    <div class="stack cv">
      <button class="sb" aria-label="Quick select"><svg width="22" height="20"><path d="M8 0l-5 6h4L4 10l8-6H8z" fill="#ffd27a"/><path d="M9 8h12v12H9z" fill="#eee"/><path d="M11 11h2M14 11h5M11 14h2M14 14h5M11 17h2M14 17h5" stroke="#3a8fd8"/><use href="#ptr" x="1" y="6" width="9" height="12"/></svg></button>
      <button class="sb" aria-label="Select all"><svg width="22" height="20"><path d="M1.500 1.500h17v17h-17z" stroke="#53d28a" stroke-dasharray="2 1"/><path d="M4 6h9v10H4z" fill="#4fb57b"/><path d="M7 3h10v10H7z" fill="#7cdba6"/><use href="#ptr" x="12" y="8" width="9" height="12"/></svg></button>
      <button class="sb" aria-label="Calculator"><svg width="22" height="20"><path d="M3 0h15v20H3z" fill="#d8d8d8"/><path d="M5 2h11v4H5z" fill="#555"/><path d="M5 9.500h11M5 13h11M5 16.500h11" stroke="#555" stroke-width="2.500" stroke-dasharray="3 1"/></svg></button>
    </div></div><div class="ptitle">Utilities <svg width="10" height="6"><use href="#dl"/></svg></div></section>

  <section class="rpanel" style="width:98px"><div class="pbody">
    <button class="big" style="width:66px"><svg class="ic" viewBox="0 0 44 42"><path d="M5 5h28v31H5z" fill="#d7a86e"/><path d="M12 4h4c0-4 6-4 6 0h4v4H12z" fill="#fff"/><path d="M14 12h16l8 9v21H14z" fill="#d8d8d8" stroke="#3b4453"/><path d="M30 12v9h8z" fill="#fff" stroke="#3b4453"/></svg><span class="lb">Paste</span><svg width="7" height="4"><use href="#dn"/></svg></button>
    <div class="stack cv">
      <button class="sb" aria-label="Cut"><svg width="22" height="20"><path d="M2 0h15v18H2z" fill="#d8d8d8"/><path d="M4 4.500h8M4 8.500h10M4 12.500h6" stroke="#555"/><path d="M11 8l9 9M20 8l-9 9" stroke="#3b4453" stroke-width="4"/><path d="M11 8l9 9M20 8l-9 9" stroke="#fff" stroke-width="1.500"/><circle cx="12" cy="18" r="1.500" stroke="#fff"/><circle cx="19" cy="18" r="1.500" stroke="#fff"/></svg></button>
      <button class="sb" aria-label="Copy clip"><svg width="22" height="20"><path d="M4 0h10v16H4z" fill="#d8d8d8"/><path d="M7 2h8l5 5v13H7z" fill="#d8d8d8" stroke="#3b4453"/><path d="M15 2v5h5z" fill="#fff" stroke="#3b4453"/></svg></button>
    </div></div><div class="ptitle">Clipboard</div></section>

  <section class="rpanel" style="width:78px"><div class="pbody justify-content-center">
    <button class="big"><svg class="ic" viewBox="0 0 44 42"><path d="M2 4h18v13h22v17H2z" fill="#d8d8d8"/></svg><span class="lb">Base</span><svg width="7" height="4"><use href="#dn"/></svg></button>
    </div><div class="ptitle">View <svg width="10" height="6"><use href="#dl"/></svg><svg width="9" height="9"><use href="#launch"/></svg></div></section>

  <section class="rpanel" style="width:53px"><div class="pbody justify-content-center">
    <button class="big"><svg class="ic" viewBox="0 0 44 42"><circle cx="21" cy="9" r="8" stroke="#1f242c" stroke-width="1.500"/><path d="M19 8c0-3 4-3 4 0v11l4-1 1 2 4-1 1 2 4 0c2 6 0 12-3 16-2 5-9 5-12 2L12 25c0-3 3-3 7 1z" fill="#f2f2f2"/></svg><span class="lb">Select<br>Mode</span></button>
    </div><div class="ptitle">Touch</div></section>
</div>

<div class="doctabs d-flex align-items-end">
  <a href="#" class="dtab"><svg class="shape" width="170" height="27"><path d="M0 27C8 25 10 18 12 10 14 3 17 0 24 0H153C162 0 163 8 164 14V27z" fill="#2f3744"/></svg><span>Start</span></a>
  <a href="#" class="dtab text-white" style="padding-left:13px"><svg class="shape" width="172" height="27"><path d="M0 27C8 25 9 18 11 10 13 3 16 0 22 0H146C156 0 157 10 160 17 162 23 165 26 172 27z" fill="#3b4453"/></svg><span>P2</span><svg width="11" height="11" style="margin-left:98px"><path d="M1 1l9 9M10 1l-9 9" stroke="#b4b6bb" stroke-width="2.200"/></svg></a>
  <button aria-label="New drawing" class="ms-2"><svg width="26" height="24"><path d="M0 2h16c7 0 9 6 9 18H8C2 20 3 8 0 2z" fill="#2f3744"/><path d="M7 11h10M12 6v10" stroke="#a8adb5" stroke-width="2"/></svg></button>
</div>
<div class="strip"></div>

<div class="cad">
  <svg class="scene" shape-rendering="crispEdges">
    <defs>
      <pattern id="minor" x="32" y="5" width="49" height="49" patternUnits="userSpaceOnUse"><path d="M.5 0v49M0 .5h49" stroke="#272f3b"/></pattern>
      <pattern id="major" x="32" y="5" width="245" height="245" patternUnits="userSpaceOnUse"><path d="M.5 0v245M0 .5h245" stroke="#2f3748"/></pattern>
    </defs>
    <rect width="100%" height="100%" fill="url(#minor)"/><rect width="100%" height="100%" fill="url(#major)"/>
    <path d="M32.500 0V740" stroke="#1f6b22"/><path d="M33 740.500H1909" stroke="#7a2226"/>
    <g stroke="#fff"><path d="M81 495.500H474M277.500 299V692M228.500 348.500l98 294M326.500 348.500l-98 294M179.500 397.500l196 196M375.500 397.500l-196 196M130.500 446.500l294 98M424.500 446.500l-294 98"/>
    <path d="M640 200.500h46M691 200.500h46M688.500 152v46M688.500 203v46M686.500 197.500h4v6h-4z"/>
    <path d="M19.500 674v62.500H82M14.500 730.500h10v11h-10z"/><path d="M21 655l7 8 7-8M28.500 663v7M86 720l15 15M101 720l-15 15"/></g>
    <g stroke="#f00"><circle cx="1135.500" cy="299.500" r="49"/><circle cx="1061.500" cy="372.500" r="49"/><circle cx="1208.500" cy="372.500" r="49"/><circle cx="1135.500" cy="446.500" r="49"/></g>
    <circle cx="1135" cy="372.500" r="24" stroke="#ff0" stroke-dasharray="27.700 10" stroke-dashoffset="-5"/>
    <text x="618" y="692" fill="#fff" stroke="#fff" font-family="Liberation Sans, Arial, sans-serif" font-size="103">PROIECT GAC</text>
  </svg>
  <div class="vpl">[−][Top][2D Wireframe]</div>
  <div class="wctl"><button aria-label="Minimize view"><svg width="15" height="16"><path d="M1 12h13" stroke="#fff" stroke-width="3"/></svg></button><button aria-label="Restore view"><svg width="15" height="16"><path d="M5 2.500h8.500V12M3 6h8v7H3z" stroke="#fff" stroke-width="2"/></svg></button><button aria-label="Close view"><svg width="15" height="16"><path d="M3 4l9 9M12 4l-9 9" stroke="#fff" stroke-width="3"/></svg></button></div>
  <svg class="vcube" width="138" height="142" viewBox="0 0 138 142" font-family="Liberation Sans, Arial, sans-serif" font-weight="700" font-size="22" text-anchor="middle"><circle cx="69" cy="71" r="57" stroke="#464b53" stroke-width="14"/><path d="M41 43h56v56H41z" fill="#b0b1b2"/><path d="M52 54h34v34H52z" fill="#9fa4a9"/><text x="69" y="19">N</text><text x="69" y="139">S</text><text x="11" y="79">W</text><text x="129" y="79">E</text><text x="69" y="76" font-size="13" style="fill:#4a4f5a" font-family="Open Sans, sans-serif">TOP</text></svg>
  <button class="wcs">WCS<svg width="11" height="6"><path d="M.5 .5h10L5.500 5z" stroke="#c5c7d0"/></svg></button>
  <div class="navbox"><svg width="39" height="258" viewBox="0 0 39 258"><g class="uicon"><circle cx="32" cy="6" r="4" stroke-width="1.500"/><path d="M30 4l4 4M34 4l-4 4" stroke-width="1"/><path d="M19 21h14v13a14 14 0 1 1-14-13z" fill="#5c616b"/><circle cx="19" cy="34" r="7"/><path d="M9 44l5-5M29 44l-5-5"/><path d="M14 99C10 93 3 86 6 85c3-1 5 4 7 3L10 78c0-3 3-3 4 0l3 7 0-10c0-3 4-3 4 0v10l3-9c1-3 4-2 3 1l-2 10 4-5c2-2 4 0 3 2l-5 12-3 3z" fill="#5c616b" stroke-width="1.500"/><path d="M5 109l20 18M24 109L5 127M5 114v-5h5M19 109h5v5M5 122v5h5"/><circle cx="25" cy="127" r="6" fill="#5c616b"/><path d="M29 132l5 4" stroke-width="4"/><ellipse cx="19" cy="171" rx="14" ry="5"/><path d="M16 181v-20h-3l6-6 5 6h-3v20z" fill="#5c616b" stroke-width="1.500"/><path d="M15 170v10l-7-5z" fill="#454a51" stroke="none"/><path d="M5 207h7v8H5zM15 207h7v8h-7zM26 207h7v8h-7zM5 218h20v17H5z" stroke-width="1.500"/><path d="M11 222v9l8-4.500z" fill="#454a51" stroke="none"/><circle cx="32" cy="251" r="4" stroke-width="1.500"/><path d="M30 251h4" stroke-width="1"/></g><path d="M17 59h6l-3 4zM17 146h6l-3 4zM17 193h6l-3 4z" fill="#3b4046"/><path d="M3 68.500h33M3 202.500h33" stroke="#666b70"/></svg></div>
  <div class="vscroll"></div>
  <div class="cmd"><div class="cmdl"><svg width="66" height="24"><path d="M5 1v22M9 1v22" stroke="#aaa" stroke-width="2" stroke-dasharray="2 2"/><path d="M18 7l9 9M27 7l-9 9" stroke="#bbb" stroke-width="2.200"/><path d="M45 21L56 9" stroke="#bbb" stroke-width="3.500"/><path d="M59 3c-4-1-7 2-6 6l3 3c4 0 6-3 6-6l-3 2-2-2z" fill="#bbb"/></svg></div>
    <div class="cmdr"><svg width="32" height="18"><path d="M1 1.500h18v14H1z" stroke="#555" stroke-width="1.500"/><path d="M1 1h18v4H1z" fill="#555"/><path d="M3 7l3 2-3 2M7 12h4" stroke="#555"/><path d="M23 6h9l-4.500 5z" fill="#555"/></svg><input id="cmdin" type="text" aria-label="Command line" placeholder="Type a command"><svg width="10" height="6"><path d="M0 5.500h10L5 0z" fill="#555"/></svg></div></div>
</div>

<div class="bottom">
  <div class="lay d-flex"><a href="#" class="ltab active" style="width:72px">Model</a><a href="#" class="ltab" style="width:76px">Layout1</a><a href="#" class="ltab" style="width:78px">Layout2</a><button aria-label="New layout" class="ms-1"><svg width="28" height="22"><path d="M6 1h22c-1 15-4 20-13 20H0C2 14 2 6 6 1z" fill="#2f3744"/><path d="M9 11h10M14 6v10" stroke="#a8adb5" stroke-width="2"/></svg></button></div>
  <div class="status d-flex justify-content-end">
    <div class="sg"><button class="px-1 text-white">MODEL</button></div>
    <div class="sg pe-1"><button class="st on" aria-label="Grid"><svg width="20" height="20"><path d="M5 0v20M10 0v20M15 0v20M0 5h20M0 10h20M0 15h20" stroke="#fff" stroke-width="1.200"/></svg></button><button class="st on" aria-label="Snap"><svg width="18" height="18"><path d="M2 3h16M2 9h16M2 15h16" stroke="#fff" stroke-width="3" stroke-dasharray="3 3"/></svg></button><svg width="8" height="6" class="ms-2"><use href="#dl"/></svg></div>
    <div class="sg"><button class="st" aria-label="Ortho"><svg width="22" height="22"><path d="M4 0v20h18M4 14h5v6" stroke="#ddd"/></svg></button><button class="st on" aria-label="Polar"><svg width="22" height="22"><circle cx="10" cy="12" r="7.500" stroke="#fff"/><path d="M10 12h11M10 12l8-10M15 8c2 2 2 4 1 9" stroke="#fff"/></svg></button><svg width="8" height="6" class="mx-1"><use href="#dl"/></svg><button class="st" aria-label="Isoplane"><svg width="22" height="22"><path d="M4 2l14 18" stroke="#c0575b"/><path d="M11 0v22" stroke="#3eb56a"/><path d="M9 9h4v4H9z" stroke="#ddd"/></svg></button><svg width="8" height="6" class="mx-1"><use href="#dl"/></svg></div>
    <div class="sg"><button class="st on" aria-label="Object snap tracking"><svg width="22" height="22"><path d="M17 1L2 19h19" stroke="#fff"/><path d="M8 9h4v4H8z" fill="#fff"/></svg></button><button class="st on" aria-label="Object snap"><svg width="22" height="22"><path d="M4.500 5v15h15V3.500H6" stroke="#fff"/><path d="M2 1h5v5H2z" stroke="#fff" fill="#5f90c3"/></svg></button><svg width="8" height="6" class="mx-1"><use href="#dl"/></svg></div>
    <div class="sg pe-1"><button class="st on text-white" aria-label="Annotation objects"><svg width="22" height="22"><use href="#annot" width="20" height="22"/><circle cx="18" cy="5" r="3" stroke="#fff"/></svg></button><button class="st" aria-label="Auto scale" style="color:#ddd"><svg width="22" height="22"><use href="#annot" width="20" height="22"/><path d="M19 0l-4 6h3l-2 5 6-7h-3z" fill="#ddd"/></svg></button><button class="st" aria-label="Annotation scale" style="color:#ddd"><svg width="20" height="22"><use href="#annot" width="20" height="22"/></svg></button><button class="d-flex align-items-center gap-1 ms-1">1:1<svg width="8" height="6"><use href="#dl"/></svg></button></div>
    <div class="sg pe-2"><button class="st" aria-label="Workspace"><svg width="20" height="20"><circle cx="10" cy="10" r="5.500" stroke="#ddd" stroke-width="4"/><circle cx="10" cy="10" r="8.500" stroke="#ddd" stroke-width="3" stroke-dasharray="3.300 3.370"/></svg></button><svg width="8" height="6"><use href="#dl"/></svg></div>
    <div class="sg"><button class="st" aria-label="Monitor"><svg width="20" height="20"><path d="M10 0v20M0 10h20" stroke="#ddd" stroke-width="2.500"/></svg></button></div>
    <div class="sg"><button class="st" aria-label="Isolate"><svg width="22" height="22"><path d="M2 2h7v7H2zM6 19l5-7 5 7z" stroke="#ddd"/><circle cx="16.500" cy="10" r="4" stroke="#ddd"/></svg></button></div>
    <div class="sg"><button class="st wide" aria-label="Graphics"><svg width="26" height="26"><path d="M2 1h16l4 4v11H2z" fill="#2b6fb5"/><path d="M7 0v14M1 6h14" stroke="#d8ecff"/><circle cx="7" cy="6" r="2" fill="#d8ecff"/><path d="M1 15h4l2 2h6v8H1z" fill="#f6b93b"/><path d="M11 18l4 5 9-10" stroke="#4fb75b" stroke-width="4"/></svg></button></div>
    <div class="sg"><button class="st" aria-label="Clean screen"><svg width="22" height="18"><path d="M1 1.500h19v15H1z" stroke="#ddd" stroke-width="1.500"/><path d="M13 7l4-3M17 4h-3M17 4v3M8 11l-4 3M4 14h3M4 14v-3" stroke="#ddd"/></svg></button><button class="st" aria-label="Customization"><svg width="20" height="20"><path d="M0 2.500h20M0 10h20M0 17.500h20" stroke="#ddd" stroke-width="2.200"/></svg></button></div>
  </div>
</div>

<footer class="task d-flex align-items-center">
  <button class="tk ms-1" aria-label="Start"><svg width="20" height="20"><path d="M0 3l8-1v8H0zM9 2l11-2v10H9zM0 11h8v7l-8-1zM9 11h11v9L9 18z" fill="#fff"/></svg></button>
  <button class="tk" aria-label="Search Windows"><svg width="22" height="22"><circle cx="13.500" cy="8" r="6.500" stroke="#fff" stroke-width="1.500"/><path d="M9 13l-8 8" stroke="#fff" stroke-width="1.500"/></svg></button>
  <button class="tk run" aria-label="File Explorer"><svg width="28" height="24"><path d="M0 1h10l3 3h0v4H0z" fill="#e5a20c"/><path d="M0 5h12l2-3h14v20H0z" fill="#fcd462"/><path d="M5 23v-9c0-1 1-2 2-2h14c1 0 2 1 2 2v9h-5v-5h-8v5z" fill="#3a96dd"/></svg></button>
  <button class="tk run" aria-label="Teams"><svg width="32" height="32"><circle cx="16" cy="6" r="5" fill="#7b83eb"/><circle cx="25" cy="7" r="3.500" fill="#5059c9"/><path d="M22 12h8v9c0 4-8 5-8 0z" fill="#5059c9"/><path d="M10 12h14v12c0 8-14 8-14 0z" fill="#7b83eb"/><rect y="7" width="16" height="16" rx="1" fill="#464eb8"/><text x="8" y="20" text-anchor="middle" font-size="12" font-weight="700" fill="#fff">T</text><circle cx="25" cy="24" r="6.500" fill="#6bb700" stroke="#fff"/><path d="M22 24l2 2.500 4-5" stroke="#fff" stroke-width="1.800"/></svg></button>
  <button class="tk run" aria-label="Chrome"><svg width="28" height="28" viewBox="0 0 28 28"><circle cx="14" cy="14" r="14" fill="#f9c22e"/><path d="M14 14L2 7a14 14 0 0 1 24.200 0z" fill="#dd4b3e"/><path d="M14 14h-2L1.900 7A14 14 0 0 0 14 28l6-11z" fill="#1ba261"/><path d="M14 7h12.200l-6 10z" fill="#f9c22e"/><circle cx="14" cy="14" r="6.500" fill="#fff"/><circle cx="14" cy="14" r="5" fill="#4a8af4"/></svg></button>
  <button class="tk run cur" aria-label="AutoCAD"><svg width="30" height="30"><path d="M0 0h30v30H0z" fill="#f7e2d9"/><path d="M12 3h6l7 23h-5l-3-6h-5l-3 5H4z" fill="#c5242a"/><path d="M15 9l2 7h-4z" fill="#f7e2d9"/><path d="M12 17c4-1 7 2 9 9h-2c-2-5-4-6-8-6z" fill="#8e1a20"/></svg></button>
  <div class="ms-auto d-flex align-items-center" style="gap:21px">
    <svg width="17" height="10"><path d="M1 9l7-7 7 7" stroke="#fff" stroke-width="1.500"/></svg>
    <svg width="22" height="18"><path d="M1 6h3l5-5v16l-5-5H1zM11 6c2 2 2 4 0 6" stroke="#fff"/><path d="M14 4c3 3 3 7 0 10M17 2c4 4 4 10 0 14" stroke="#888"/></svg>
    <svg width="22" height="22"><path d="M7 15L16 2l3 2-9 14-4 1zM7 12c-8 0-7 8-1 8s4-8 9-8h6" stroke="#fff" stroke-width="1.300"/></svg>
    <span>ENG</span>
  </div>
  <div class="clock ms-2">20:45<br>05.05.2020</div>
  <button aria-label="Notifications" class="ms-3"><svg width="32" height="34"><path d="M1 4h20v17H10l-5 5v-5H1z" fill="#fff"/><path d="M4 8.500h14M4 12.500h14M4 16.500h10" stroke="#222" stroke-width="1.500"/><circle cx="20" cy="23" r="10.500" fill="#2b2b2c" stroke="#777"/><text x="20" y="28" text-anchor="middle" font-size="13" fill="#fff">14</text></svg></button>
  <svg width="21" height="50"><path d="M15.500 0v50" stroke="#5a5a5a"/></svg>
</footer>
</main>
</div>
</body>
</html>
